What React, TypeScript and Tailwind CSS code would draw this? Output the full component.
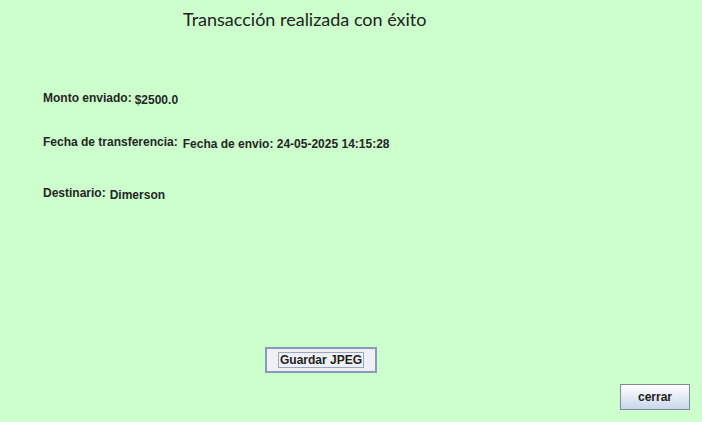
import React from 'react';

type RowProps = {
  label: string
  value: string
  gap: string
};

const Row: React.FC<RowProps> = ({ label, value, gap }: RowProps) => (
  <div className={`flex items-start ${gap}`}>
    <span className="leading-[14px]">{label}</span>
    <span className="leading-[14px] mt-[2px]">{value}</span>
  </div>
);

const App: React.FC = () => {
  return (
    <div
      className="w-[702px] h-[422px] bg-[#ccffcc] flex flex-col text-[#262626] overflow-hidden"
      style={{ fontFamily: '"Liberation Sans", Arial, sans-serif' }}
    >
      <div
        className="pl-[183px] pt-[7px] text-[18px] leading-[24px] text-[#222]"
        style={{ fontFamily: 'Lato, "Open Sans", sans-serif' }}
      >
        Transacción realizada con éxito
      </div>

      <div className="pl-[43px] flex flex-col text-[12px] font-bold">
        <div className="mt-[60px]">
          <Row label="Monto enviado:" value="$2500.0" gap="gap-[3px]" />
        </div>
        <div className="mt-[28px]">
          <Row label="Fecha de transferencia:" value="Fecha de envio: 24-05-2025 14:15:28" gap="gap-[5px]" />
        </div>
        <div className="mt-[35px]">
          <Row label="Destinario:" value="Dimerson" gap="gap-[4px]" />
        </div>
      </div>

      <div className="pl-[265px] mt-[145px]">
        <button
          type="button"
          className="w-[112px] h-[26px] border-2 border-[#8a98c2] bg-[#eef0f6] flex items-center justify-center"
        >
          <span className="border border-[#9aa6c8] px-[1px] text-[12px] font-bold leading-[14px] text-[#222]">
            Guardar JPEG
          </span>
        </button>
      </div>

      <div className="flex justify-end pr-[12px] mt-[11px]">
        <button
          type="button"
          className="w-[70px] h-[26px] border border-[#7c8c9c] bg-gradient-to-b from-white to-[#c9d6ea] text-[12px] font-bold text-[#222]"
        >
          cerrar
        </button>
      </div>
    </div>
  );
};

export default App;
